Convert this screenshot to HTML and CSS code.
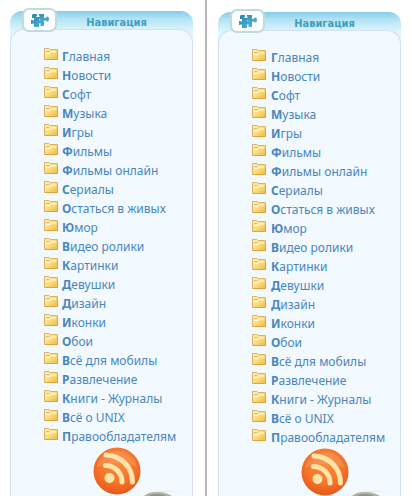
FILE: index.html
```html
<!DOCTYPE html>
<html lang="ru">
<head>
    <meta charset="UTF-8">
    <meta name="viewport" content="width=device-width, initial-scale=1.0">
    <title>Навигация</title>
    <link rel="stylesheet" href="styles.css">
</head>
<body>
    <!-- Shared icons -->
    <svg class="sprite" aria-hidden="true">
        <defs>
            <linearGradient id="folder-fill" x1="0" y1="0" x2="1" y2="1">
                <stop offset="0" stop-color="#fff3bd"/>
                <stop offset="0.5" stop-color="#fbdc80"/>
                <stop offset="1" stop-color="#f0b93c"/>
            </linearGradient>
            <linearGradient id="puzzle-fill" x1="0" y1="0" x2="1" y2="1">
                <stop offset="0" stop-color="#2583ad"/>
                <stop offset="1" stop-color="#58bde0"/>
            </linearGradient>
            <radialGradient id="rss-fill" cx="0.5" cy="0.35" r="0.65">
                <stop offset="0" stop-color="#f98b3c"/>
                <stop offset="0.6" stop-color="#f4752b"/>
                <stop offset="1" stop-color="#e9581b"/>
            </radialGradient>
        </defs>
        <symbol id="folder" viewBox="0 0 14 12">
            <path d="M.5 11.5V.5H5l1 1h7.500v10z" fill="url(#folder-fill)" stroke="#d9b264"/>
            <path d="M2 5.500h4L7.500 4H12" fill="none" stroke="#fffbe6"/>
            <path d="M2 3.500h3" fill="none" stroke="#e2b95c"/>
            <path d="M1 11.500h12.500V5" fill="none" stroke="#dda43a"/>
        </symbol>
        <symbol id="puzzle" viewBox="0 0 18 15">
            <path d="M2 1h4v1.500L5 4h3.500V3L8 2V1h5v4h1.500q.5-1.500 2-1.500T18 6t-1.500 2.500-2-1H13V13H9.500v-1.500l.5-1H7.500l.5 1V14H3v-3.500H1.500V11H0V7h1.500v.5H3V5H1V2z" fill="url(#puzzle-fill)"/>
            <path d="M8 6h1.500v1.500H8z" fill="#8fd6ec"/>
        </symbol>
        <symbol id="rss" viewBox="0 0 48 48">
            <circle cx="24" cy="24" r="23.500" fill="url(#rss-fill)"/>
            <path d="M4 20a20.500 20.500 0 0 1 40 0Q24 12 4 20z" fill="#fff" opacity="0.12"/>
            <circle cx="16.500" cy="31" r="5" fill="#ffe3a8"/>
            <path d="M12.500 18.500A16.500 16.500 0 0 1 29 35M13 8A27 27 0 0 1 39.500 35" fill="none" stroke="#ffe3a8" stroke-width="5" stroke-linecap="round"/>
        </symbol>
        <symbol id="badge" viewBox="0 0 48 5">
            <path d="M8 1Q28-1 44 0L24 1z" fill="#e6e9e5"/>
            <path d="M3 5Q7 1 16 1T31 5z" fill="#b5b3a4"/>
            <path d="M7 5q3-2 9-2t9 2z" fill="#8f9488"/>
        </symbol>
    </svg>

    <div class="columns">
        <div class="column">
            <nav class="panel">
                <div class="panel-header">
                    <span class="panel-icon"><svg><use href="#puzzle"/></svg></span>
                    <h2>Навигация</h2>
                </div>
                <div class="panel-body">
                    <ul class="menu">
                        <li><svg><use href="#folder"/></svg><a href="#">Главная</a></li>
                        <li><svg><use href="#folder"/></svg><a href="#">Новости</a></li>
                        <li><svg><use href="#folder"/></svg><a href="#">Софт</a></li>
                        <li><svg><use href="#folder"/></svg><a href="#">Музыка</a></li>
                        <li><svg><use href="#folder"/></svg><a href="#">Игры</a></li>
                        <li><svg><use href="#folder"/></svg><a href="#">Фильмы</a></li>
                        <li><svg><use href="#folder"/></svg><a href="#">Фильмы онлайн</a></li>
                        <li><svg><use href="#folder"/></svg><a href="#">Сериалы</a></li>
                        <li><svg><use href="#folder"/></svg><a href="#">Остаться в живых</a></li>
                        <li><svg><use href="#folder"/></svg><a href="#">Юмор</a></li>
                        <li><svg><use href="#folder"/></svg><a href="#">Видео ролики</a></li>
                        <li><svg><use href="#folder"/></svg><a href="#">Картинки</a></li>
                        <li><svg><use href="#folder"/></svg><a href="#">Девушки</a></li>
                        <li><svg><use href="#folder"/></svg><a href="#">Дизайн</a></li>
                        <li><svg><use href="#folder"/></svg><a href="#">Иконки</a></li>
                        <li><svg><use href="#folder"/></svg><a href="#">Обои</a></li>
                        <li><svg><use href="#folder"/></svg><a href="#">Всё для мобилы</a></li>
                        <li><svg><use href="#folder"/></svg><a href="#">Развлечение</a></li>
                        <li><svg><use href="#folder"/></svg><a href="#">Книги - Журналы</a></li>
                        <li><svg><use href="#folder"/></svg><a href="#">Всё о UNIX</a></li>
                        <li><svg><use href="#folder"/></svg><a href="#">Правообладателям</a></li>
                    </ul>
                    <div class="panel-footer">
                        <a class="rss" href="#" aria-label="RSS"><svg><use href="#rss"/></svg></a>
                        <svg class="badge" aria-hidden="true"><use href="#badge"/></svg>
                    </div>
                </div>
            </nav>
        </div>

        <div class="column column-smooth">
            <nav class="panel">
                <div class="panel-header">
                    <span class="panel-icon"><svg><use href="#puzzle"/></svg></span>
                    <h2>Навигация</h2>
                </div>
                <div class="panel-body">
                    <ul class="menu">
                        <li><svg><use href="#folder"/></svg><a href="#">Главная</a></li>
                        <li><svg><use href="#folder"/></svg><a href="#">Новости</a></li>
                        <li><svg><use href="#folder"/></svg><a href="#">Софт</a></li>
                        <li><svg><use href="#folder"/></svg><a href="#">Музыка</a></li>
                        <li><svg><use href="#folder"/></svg><a href="#">Игры</a></li>
                        <li><svg><use href="#folder"/></svg><a href="#">Фильмы</a></li>
                        <li><svg><use href="#folder"/></svg><a href="#">Фильмы онлайн</a></li>
                        <li><svg><use href="#folder"/></svg><a href="#">Сериалы</a></li>
                        <li><svg><use href="#folder"/></svg><a href="#">Остаться в живых</a></li>
                        <li><svg><use href="#folder"/></svg><a href="#">Юмор</a></li>
                        <li><svg><use href="#folder"/></svg><a href="#">Видео ролики</a></li>
                        <li><svg><use href="#folder"/></svg><a href="#">Картинки</a></li>
                        <li><svg><use href="#folder"/></svg><a href="#">Девушки</a></li>
                        <li><svg><use href="#folder"/></svg><a href="#">Дизайн</a></li>
                        <li><svg><use href="#folder"/></svg><a href="#">Иконки</a></li>
                        <li><svg><use href="#folder"/></svg><a href="#">Обои</a></li>
                        <li><svg><use href="#folder"/></svg><a href="#">Всё для мобилы</a></li>
                        <li><svg><use href="#folder"/></svg><a href="#">Развлечение</a></li>
                        <li><svg><use href="#folder"/></svg><a href="#">Книги - Журналы</a></li>
                        <li><svg><use href="#folder"/></svg><a href="#">Всё о UNIX</a></li>
                        <li><svg><use href="#folder"/></svg><a href="#">Правообладателям</a></li>
                    </ul>
                    <div class="panel-footer">
                        <a class="rss" href="#" aria-label="RSS"><svg><use href="#rss"/></svg></a>
                        <svg class="badge" aria-hidden="true"><use href="#badge"/></svg>
                    </div>
                </div>
            </nav>
        </div>
    </div>
</body>
</html>
```
FILE: styles.css
```css
* {
    box-sizing: border-box;
}

body {
    margin: 0;
    background-color: #fff;
    font-family: "Noto Sans", "DejaVu Sans", sans-serif;
    font-size: 12px;
}

.sprite {
    position: absolute;
    width: 0;
    height: 0;
}

.columns {
    display: flex;
    min-height: 100vh;
}

.column {
    display: flex;
    flex: 1;
    padding: 11px 12px 0 10px;
}

.column-smooth {
    padding: 12px 11px 0;
    border-left: 2px solid #b9b4bd;
}

.panel {
    display: flex;
    flex: 1;
    flex-direction: column;
    background: linear-gradient(#86cdea, #b5e3f4 8px, #dff6fd 20px);
    border-radius: 12px 12px 0 0;
}

.panel-header {
    position: relative;
    height: 18px;
}

.panel-header h2 {
    margin: 0;
    padding-left: 30px;
    color: #3f9fc2;
    font-family: "DejaVu Sans Condensed", "DejaVu Sans", sans-serif;
    font-size: 11px;
    line-height: 23px;
    text-align: center;
}

/* Tab that sticks out over the header */
.panel-icon {
    position: absolute;
    top: -3px;
    left: 12px;
    display: flex;
    align-items: center;
    justify-content: center;
    width: 35px;
    height: 24px;
    background-color: #fff;
    border: 2px solid #bfdbe2;
    border-radius: 7px;
}

.panel-icon svg {
    width: 18px;
    height: 15px;
}

.panel-body {
    display: flex;
    flex: 1;
    flex-direction: column;
    padding: 18px 0 0 33px;
    background-color: #f2f9ff;
    border: 1px solid #d4dff0;
    border-bottom: none;
    border-radius: 14px 14px 0 0;
}

.menu {
    margin: 0;
    padding: 0;
    list-style: none;
}

.menu li {
    display: flex;
    gap: 4px;
    height: 19px;
}

.column-smooth .menu li {
    gap: 5px;
}

.menu svg {
    flex: none;
    width: 14px;
    height: 12px;
}

.menu a {
    display: block;
    color: #4a86bd;
    line-height: 18px;
    text-decoration: none;
    white-space: nowrap;
}

.menu a::first-letter {
    font-weight: bold;
}

.menu a:hover {
    text-decoration: underline;
}

.panel-footer {
    display: flex;
    flex: 1;
    justify-content: flex-end;
    padding-right: 3px;
}

.rss svg {
    display: block;
    width: 48px;
    height: 48px;
}

.badge {
    align-self: flex-end;
    width: 48px;
    height: 5px;
}
```
